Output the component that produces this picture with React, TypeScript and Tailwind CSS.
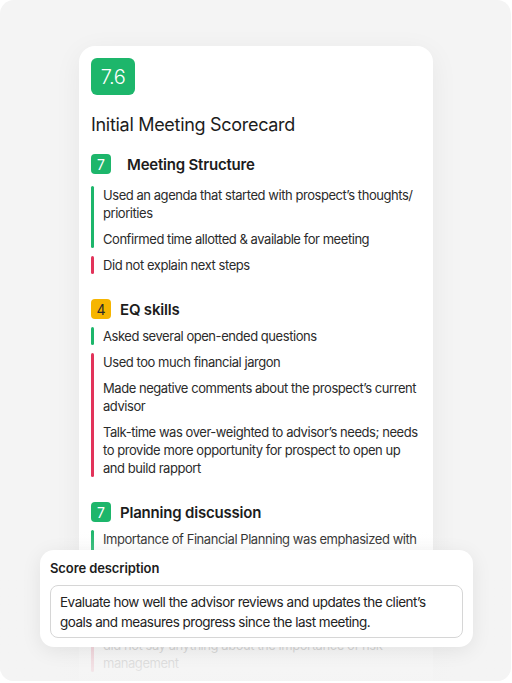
import React from "react";

type Group = { tone: "good" | "bad"; items: React.ReactNode[] };
type Section = { score: string; tone: "green" | "amber"; title: string; first?: boolean; groups: Group[] };

const sections: Section[] = [
  {
    score: "7",
    tone: "green",
    title: "Meeting Structure",
    first: true,
    groups: [
      {
        tone: "good",
        items: [
          "Used an agenda that started with prospect’s thoughts/ priorities",
          "Confirmed time allotted & available for meeting",
        ],
      },
      { tone: "bad", items: ["Did not explain next steps"] },
    ],
  },
  {
    score: "4",
    tone: "amber",
    title: "EQ skills",
    groups: [
      { tone: "good", items: ["Asked several open-ended questions"] },
      {
        tone: "bad",
        items: [
          "Used too much financial jargon",
          "Made negative comments about the prospect’s current advisor",
          "Talk-time was over-weighted to advisor’s needs; needs to provide more opportunity for prospect to open up and build rapport",
        ],
      },
    ],
  },
  {
    score: "7",
    tone: "green",
    title: "Planning discussion",
    groups: [
      {
        tone: "good",
        items: ["Importance of Financial Planning was emphasized with clear examples from past clients"],
      },
      {
        tone: "bad",
        items: [
          "Did not ask about existing estate planning documents or beneficiaries",
          <>
            Did not review the client’s existing insurance;
            <br />
            did not say anything about the importance of risk
            <br />
            management
          </>,
        ],
      },
    ],
  },
];

export default function App() {
  return (
    <div
      className="w-[512px] h-[683px] bg-white"
      style={{ fontFamily: "Inter, 'Noto Sans', sans-serif" }}
    >
      <div className="relative w-[511px] h-[681px] rounded-[14px] bg-[#f4f4f4] overflow-hidden pt-[46px]">
        <div className="ml-[79px] w-[354px] bg-white rounded-[16px] shadow-[0_6px_28px_rgba(0,0,0,0.06)] px-3 pt-3 pb-8">
          <div className="w-[44px] h-[37px] rounded-[6px] bg-[#1db66b] flex items-center justify-center text-white text-[20px] font-light tracking-[-0.5px]">
            7.6
          </div>
          <div className="mt-[18px] text-[18px] leading-[24px] text-[#1c1c1c] tracking-[-0.3px]">
            Initial Meeting Scorecard
          </div>
          <div className="mt-[17px] flex flex-col gap-[25px]">
            {sections.map((s, i) => (
              <div key={i}>
                <div className="flex items-center h-[20px]">
                  <div
                    className={
                      "w-[20px] h-[20px] rounded-[4px] flex items-center justify-center text-[14px] " +
                      (s.tone === "green" ? "bg-[#1db66b] text-white" : "bg-[#f6b500] text-[#2a2a2a]")
                    }
                  >
                    {s.score}
                  </div>
                  <div
                    className={
                      "text-[15px] leading-[20px] pt-[2px] font-semibold text-[#1c1c1c] tracking-[-0.2px] " +
                      (s.first ? "ml-[16px]" : "ml-[9px]")
                    }
                  >
                    {s.title}
                  </div>
                </div>
                <div className={"flex flex-col gap-[8px] " + (s.first ? "mt-[12px]" : "mt-[8px]")}>
                  {s.groups.map((g, j) => (
                    <div key={j} className="flex gap-[9px]">
                      <div
                        className={
                          "w-[3px] shrink-0 rounded-full " +
                          (g.tone === "good" ? "bg-[#1db66b]" : "bg-[#e2335a]")
                        }
                      />
                      <div className="flex flex-col gap-[8px] text-[13px] leading-[18px] text-[#2b2b2b] tracking-[-0.45px]">
                        {g.items.map((t, k) => (
                          <div key={k}>{t}</div>
                        ))}
                      </div>
                    </div>
                  ))}
                </div>
              </div>
            ))}
          </div>
        </div>

        <div className="absolute left-0 right-0 bottom-0 h-[150px] bg-gradient-to-b from-[#f4f4f4]/0 via-[#f4f4f4]/70 to-[#f4f4f4]/95" />

        <div className="absolute left-[40px] top-[550px] w-[433px] bg-white rounded-[14px] shadow-[0_4px_20px_rgba(0,0,0,0.08)] px-[10px] pt-[9px] pb-[9px]">
          <div className="text-[13px] leading-[18px] font-semibold text-[#1c1c1c] tracking-[-0.1px]">
            Score description
          </div>
          <div className="mt-[8px] border border-[#d6d6d6] rounded-[8px] px-[9px] pt-[6px] pb-[5px] text-[13.5px] leading-[20px] text-[#232323] tracking-[-0.5px]">
            Evaluate how well the advisor reviews and updates the client’s goals and measures progress since the last meeting.
          </div>
        </div>
      </div>
    </div>
  );
}
